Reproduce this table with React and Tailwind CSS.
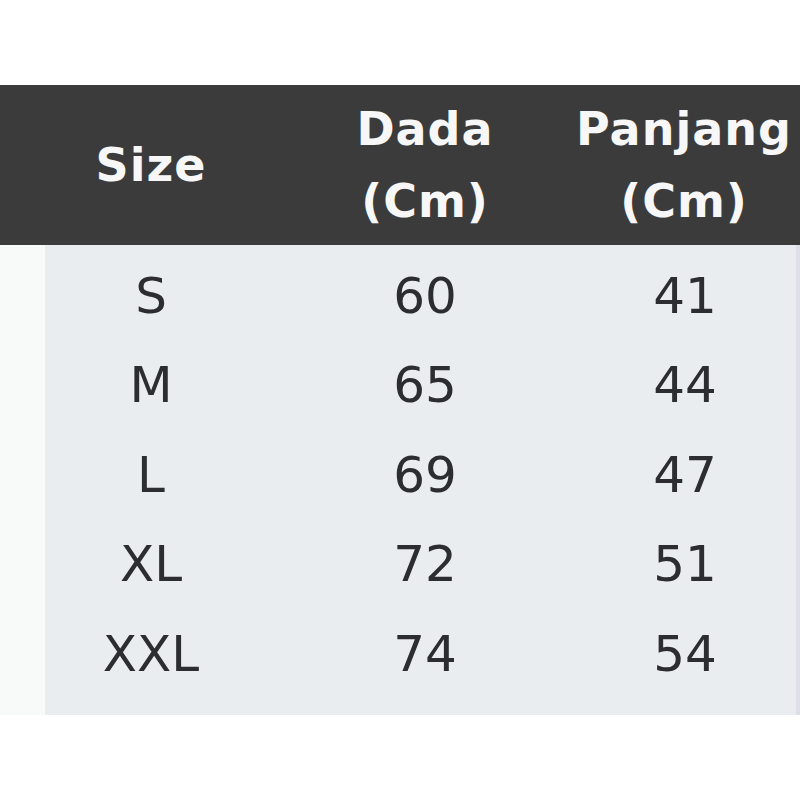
const rows = [
  ['S', '60', '41'],
  ['M', '65', '44'],
  ['L', '69', '47'],
  ['XL', '72', '51'],
  ['XXL', '74', '54'],
];

const headFont = "font-['DejaVu_Sans',sans-serif] font-bold text-[46px] tracking-[1px] text-[#f7f7f7]";
const cellFont = "font-['DejaVu_Sans',sans-serif] text-[50px] leading-none text-[#2b2d31]";

export default function App() {
  return (
    <div className="h-[800px] w-[800px] overflow-hidden bg-white">
      <div className="h-[85px]" />

      <div className="flex h-[160px] items-center bg-[#3b3b3c]">
        <div className={`w-[302px] text-center leading-none ${headFont}`}>Size</div>
        <div className={`w-[246px] text-center leading-[72px] ${headFont}`}>
          <div>Dada</div>
          <div>(Cm)</div>
        </div>
        <div className={`ml-auto w-[232px] text-center leading-[72px] tracking-[0px] ${headFont}`}>
          <div>Panjang</div>
          <div>(Cm)</div>
        </div>
      </div>

      <div className="flex h-[470px]">
        <div className="w-[45px] bg-[#f8f9f9]" />
        <div className="flex-1 bg-[#eaedf0] pt-[6px]">
          {rows.map(([size, dada, panjang]) => (
            <div key={size} className={`flex h-[89.5px] items-center ${cellFont}`}>
              <div className="w-[212px] text-center">{size}</div>
              <div className="ml-[62px] w-[212px] text-center">{dada}</div>
              <div className="ml-auto w-[222px] text-center">{panjang}</div>
            </div>
          ))}
        </div>
        <div className="w-[4px] bg-[#dedfe8]" />
      </div>
    </div>
  );
}
